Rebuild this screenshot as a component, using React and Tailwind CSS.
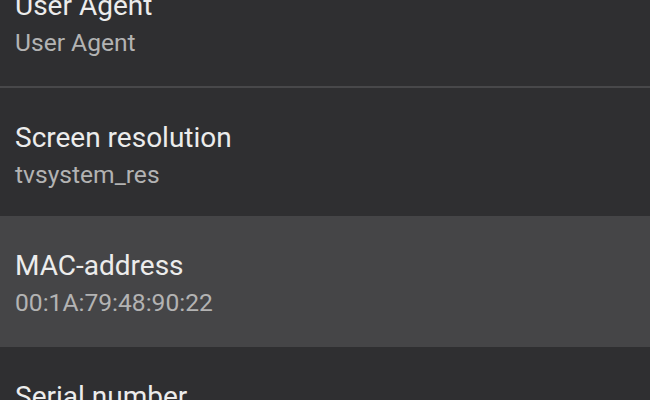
const rows = [
    { title: "User Agent", value: "User Agent", height: "h-[130px]", divider: true },
    { title: "Screen resolution", value: "tvsystem_res", height: "h-[128px]" },
    { title: "MAC-address", value: "00:1A:79:48:90:22", height: "h-[131px]", active: true },
    { title: "Serial number", value: "", height: "h-[130px]" },
];

const SettingRow = ({ title, value, height, active, divider }) => (
    <>
        <div className={`${height} shrink-0 px-[15px] pt-[34px] ${active ? "bg-[#454547]" : ""}`}>
            <div className="text-[28px] leading-[32px] text-[#ececec]">{title}</div>
            <div className="mt-[7px] text-[24.6px] leading-[28px] text-[#b3b3b3]">{value}</div>
        </div>
        {divider && <div className="h-[2px] shrink-0 bg-[#48484a]" />}
    </>
);

export default function App() {
    return (
        <div
            className="w-[650px] h-[400px] overflow-hidden bg-[#2f2f31]"
            style={{ fontFamily: "Roboto, 'Noto Sans', sans-serif" }}
        >
            <div className="flex flex-col mt-[-44px]">
                {rows.map((row) => (
                    <SettingRow key={row.title} {...row} />
                ))}
            </div>
        </div>
    );
}
